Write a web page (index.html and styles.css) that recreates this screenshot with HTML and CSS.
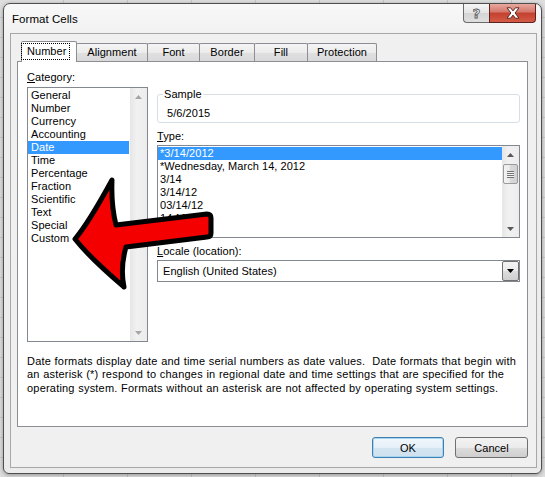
FILE: index.html
```html
<!DOCTYPE html>
<html>
<head>
<meta charset="utf-8">
<title>Format Cells</title>
<link rel="stylesheet" href="styles.css">
</head>
<body>
<div class="dialog">
  <div class="titlebar">
    <span class="title">Format Cells</span>
    <div class="caption">
      <div class="help"><span class="help-q">?</span></div>
      <div class="close">
        <svg width="14" height="12" viewBox="0 0 14 12"><path d="M1 0.8h3.6L7 3.9l2.4-3.1H13L9.1 6l3.9 5.2H9.4L7 8.1l-2.4 3.1H1L4.9 6z" fill="#fff" stroke="#5b2a23" stroke-width="1" stroke-linejoin="round"/></svg>
      </div>
    </div>
  </div>
  <div class="client">
    <div class="tabs">
      <div class="tab active w-number"><span class="focus">Number</span></div>
      <div class="tab w-align">Alignment</div>
      <div class="tab w-font">Font</div>
      <div class="tab w-border">Border</div>
      <div class="tab w-fill">Fill</div>
      <div class="tab w-prot">Protection</div>
    </div>
    <div class="panel">
      <div class="cols">
        <div class="left">
          <div class="label"><u>C</u>ategory:</div>
          <div class="listbox cat-list">
            <div class="items">
              <div class="item">General</div>
              <div class="item">Number</div>
              <div class="item">Currency</div>
              <div class="item">Accounting</div>
              <div class="item sel">Date</div>
              <div class="item">Time</div>
              <div class="item">Percentage</div>
              <div class="item">Fraction</div>
              <div class="item">Scientific</div>
              <div class="item">Text</div>
              <div class="item">Special</div>
              <div class="item">Custom</div>
            </div>
            <div class="vscroll disabled">
              <div class="sbtn"><svg width="7" height="4" viewBox="0 0 7 4"><path d="M0 4L3.5 0L7 4z"/></svg></div>
              <div class="sbtn"><svg width="7" height="4" viewBox="0 0 7 4"><path d="M0 0L7 0L3.5 4z"/></svg></div>
            </div>
          </div>
        </div>
        <div class="right">
          <fieldset class="sample">
            <legend>Sample</legend>
            <div class="sample-val">5/6/2015</div>
          </fieldset>
          <div class="label type-label"><u>T</u>ype:</div>
          <div class="listbox type-list">
            <div class="items">
              <div class="item sel">*3/14/2012</div>
              <div class="item">*Wednesday, March 14, 2012</div>
              <div class="item">3/14</div>
              <div class="item">3/14/12</div>
              <div class="item">03/14/12</div>
              <div class="item">14-Mar</div>
              <div class="item">14-Mar-12</div>
            </div>
            <div class="vscroll">
              <div class="sbtn"><svg width="7" height="4" viewBox="0 0 7 4"><path d="M0 4L3.5 0L7 4z"/></svg></div>
              <div class="thumb"><div class="grip"></div></div>
              <div class="spacer"></div>
              <div class="sbtn"><svg width="7" height="4" viewBox="0 0 7 4"><path d="M0 0L7 0L3.5 4z"/></svg></div>
            </div>
          </div>
          <div class="label locale-label"><u>L</u>ocale (location):</div>
          <div class="combo">
            <span class="combo-text">English (United States)</span>
            <div class="dd-btn"><svg width="7" height="4" viewBox="0 0 7 4"><path d="M0 0L7 0L3.5 4z"/></svg></div>
          </div>
        </div>
      </div>
      <p class="desc">Date formats display date and time serial numbers as date values.&nbsp; Date formats that begin with<br>an asterisk (*) respond to changes in regional date and time settings that are specified for the<br>operating system. Formats without an asterisk are not affected by operating system settings.</p>
    </div>
    <div class="buttons">
      <div class="btn default">OK</div>
      <div class="btn">Cancel</div>
    </div>
  </div>
</div>
<svg class="arrow" width="545" height="477" viewBox="0 0 545 477">
  <path d="M75 239 C86 226, 100 202, 112 180 Q111 205, 116 225 L207 214 Q211 214, 211 218 L211 233 Q211 237, 207 237 L126 247 Q120 268, 124 287 C110 275, 90 258, 75 239 Z" fill="#f40000" stroke="#000" stroke-width="5" stroke-linejoin="round"/>
</svg>
</body>
</html>
```

FILE: styles.css
```css
* { box-sizing: border-box; }
html, body { margin: 0; padding: 0; }
body {
  width: 545px;
  height: 477px;
  overflow: hidden;
  padding-top: 3px;
  background-color: #dedede;
  background-image:
    repeating-linear-gradient(90deg, transparent 0 63px, #c6c6c6 63px 64px),
    repeating-linear-gradient(0deg, transparent 0 19px, #cacaca 19px 20px);
  font-family: "Liberation Sans", Arial, sans-serif;
  font-size: 11px;
  letter-spacing: 0.05px;
  color: #000;
}

.dialog {
  margin-left: 3px;
  width: 539px;
  height: 471px;
  border: 1px solid #4e4e4e;
  border-radius: 7px 7px 6px 6px;
  background: linear-gradient(#f8f8f8, #efefef 40px, #ebebeb);
  padding: 0 4px 5px 6px;
  box-shadow: 0 1px 4px rgba(0, 0, 0, 0.35);
  display: flex;
  flex-direction: column;
}

.titlebar {
  height: 29px;
  display: flex;
  justify-content: space-between;
  align-items: flex-start;
  flex: none;
}
.title {
  margin: 8px 0 0 2px;
  font-size: 11.5px;
  line-height: 14px;
}
.caption { display: flex; margin-right: 1px; }
.help {
  width: 26px;
  height: 19px;
  border: 1px solid #6b6b6b;
  border-top: none;
  border-right: none;
  border-radius: 0 0 0 4px;
  background: linear-gradient(#f6f6f6, #e4e4e4 50%, #d4d4d4 50%, #dfdfdf);
  display: flex;
  align-items: center;
  justify-content: center;
}
.help-q {
  font-family: "DejaVu Sans", sans-serif;
  font-size: 13px;
  font-weight: bold;
  line-height: 13px;
  color: #f4f4f4;
  -webkit-text-stroke: 0.8px #555;
}
.close {
  width: 47px;
  height: 19px;
  border: 1px solid #5a2320;
  border-top: none;
  border-radius: 0 0 4px 0;
  background: linear-gradient(#e8a89e, #d5766b 45%, #c3402f 50%, #d45c45 100%);
  display: flex;
  align-items: center;
  justify-content: center;
}

.client {
  width: 527px;
  height: 435px;
  background: #f0f0f0;
  border: 1px solid #a8a8a8;
  padding: 7px 8px 9px 6px;
  display: flex;
  flex-direction: column;
  flex: none;
}

.tabs {
  display: flex;
  align-items: flex-end;
  height: 20px;
  margin-left: 4px;
  position: relative;
  z-index: 1;
  flex: none;
}
.tab {
  height: 18px;
  border: 1px solid #8c8e94;
  border-bottom: none;
  border-radius: 2px 2px 0 0;
  background: linear-gradient(#f4f4f4, #ececec 50%, #e0e0e0 50%, #d9d9d9);
  display: flex;
  align-items: center;
  justify-content: center;
  line-height: 13px;
  margin-right: -1px;
}
.tab.active {
  height: 21px;
  margin-bottom: -1px;
  background: #fff;
  justify-content: flex-start;
  padding-left: 0;
  padding-bottom: 2px;
}
.focus {
  outline: 1px dotted #000;
  outline-offset: 0;
  padding: 1px 3px 1px 5px;
}
.w-number { width: 56px; }
.w-align { width: 72px; }
.w-font { width: 53px; }
.w-border { width: 56px; }
.w-fill { width: 54px; }
.w-prot { width: 70px; }

.panel {
  width: 511px;
  height: 366px;
  background: #fff;
  border: 1px solid #8c8e94;
  padding: 8px 7px 0 9px;
  flex: none;
}
.cols { display: flex; gap: 9px; }
.left { width: 121px; flex: none; }
.right { width: 363px; flex: none; }
.label { line-height: 14px; height: 14px; white-space: nowrap; }

.listbox {
  border: 1px solid #828790;
  display: flex;
  background: #fff;
}
.cat-list { margin-top: 3px; height: 255px; }
.items { flex: 1; min-width: 0; padding-top: 1px; }
.item {
  height: 13px;
  line-height: 13px;
  padding-left: 2px;
  white-space: nowrap;
  overflow: hidden;
}
.cat-list .item { padding-left: 3px; }
.item.sel { background: #3399ff; color: #fff; }
.cat-list .items { padding-right: 1px; }

.vscroll {
  width: 17px;
  flex: none;
  background: linear-gradient(90deg, #e6e6e6, #f1f1f1 40%, #ececec);
  display: flex;
  flex-direction: column;
  justify-content: space-between;
}
.sbtn {
  height: 17px;
  display: flex;
  align-items: center;
  justify-content: center;
}
.sbtn svg { fill: #5a5a5a; }
.vscroll.disabled .sbtn svg { fill: #a6a6a6; }
.thumb {
  margin: 1px 1px 0 1px;
  height: 20px;
  border: 1px solid #9b9b9b;
  border-radius: 2px;
  background: linear-gradient(90deg, #f3f3f3, #e8e8e8 50%, #d9d9d9 50%, #d2d2d2);
  display: flex;
  align-items: center;
  justify-content: center;
}
.grip {
  width: 7px;
  height: 7px;
  background: repeating-linear-gradient(#727272 0 1px, #f4f4f4 1px 2px);
}
.spacer { flex: 1; }

.sample {
  margin: 17px 0 0 0;
  padding: 0 8px 2px 5px;
  border: 1px solid #d5dfe5;
  border-radius: 3px;
  min-width: 0;
}
.sample legend {
  padding: 0 1px;
  line-height: 14px;
}
.sample-val {
  line-height: 14px;
  padding: 5px 0 0 4px;
}
.type-label { margin-top: 6px; }
.type-list { margin-top: 2px; height: 93px; }
.locale-label { margin-top: 6px; }
.combo {
  margin-top: 2px;
  height: 22px;
  border: 1px solid #828790;
  display: flex;
  align-items: stretch;
  background: #fff;
}
.combo-text {
  flex: 1;
  line-height: 20px;
  padding-left: 5px;
}
.dd-btn {
  width: 17px;
  border: 1px solid #707070;
  border-radius: 2px;
  background: linear-gradient(#f3f3f3, #ebebeb 50%, #dddddd 50%, #cfcfcf);
  display: flex;
  align-items: center;
  justify-content: center;
}
.dd-btn svg { fill: #000; }

.desc {
  margin: 13px 0 0 0;
  line-height: 13.3px;
  white-space: nowrap;
  letter-spacing: 0.2px;
  word-spacing: 0.3px;
}

.buttons {
  display: flex;
  justify-content: flex-end;
  gap: 11px;
  margin-top: 10px;
  flex: none;
}
.btn {
  width: 73px;
  height: 21px;
  border: 1px solid #707070;
  border-radius: 3px;
  background: linear-gradient(#f2f2f2, #ebebeb 50%, #dddddd 50%, #cfcfcf);
  display: flex;
  align-items: center;
  justify-content: center;
  line-height: 14px;
}
.btn.default {
  width: 72px;
  border-color: #3c7fb1;
  box-shadow: inset 0 0 0 1px #a8d6f2;
  background: linear-gradient(#f0f7fc, #e6f0f8 50%, #d4e5f2 50%, #cfe0ee);
}

.arrow {
  position: absolute;
  left: 0;
  top: 0;
  pointer-events: none;
}
```
